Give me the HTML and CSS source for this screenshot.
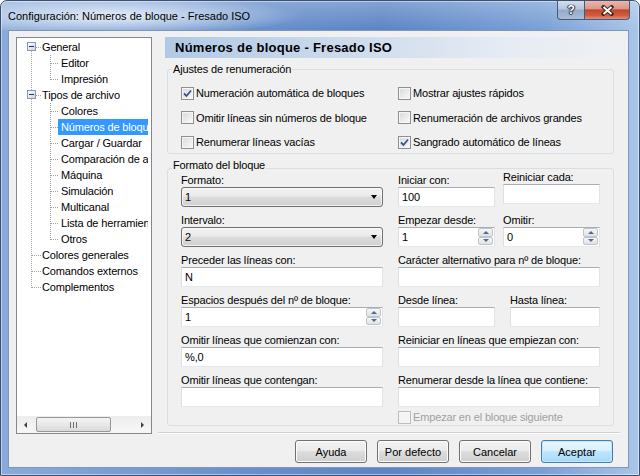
FILE: index.html
```html
<!DOCTYPE html>
<html lang="es">
<head>
    <meta charset="UTF-8">
    <title>Configuración: Números de bloque - Fresado ISO</title>
    <link rel="stylesheet" href="styles.css">
</head>
<body>
<div class="window">
    <div class="titlebar">
        <span class="title">Configuración: Números de bloque - Fresado ISO</span>
        <div class="caption-buttons">
            <span class="caption-btn help">?</span>
            <span class="caption-btn close">
                <svg width="15" height="11" viewBox="0 0 15 11">
                    <path d="M3.5 2 L11.5 9 M11.5 2 L3.5 9" stroke="#3b231c" stroke-width="3.8" stroke-linecap="square"/>
                    <path d="M3.5 2 L11.5 9 M11.5 2 L3.5 9" stroke="#fff" stroke-width="2"/>
                </svg>
            </span>
        </div>
    </div>

    <div class="client">
        <!-- options tree -->
        <div class="tree">
            <div class="tree-view">
                <svg class="tree-lines" width="133" height="260" viewBox="0 0 133 260">
                    <g stroke="#a0a0a0" stroke-dasharray="1 1" fill="none">
                        <path d="M14.5 9 V250"/>
                        <path d="M19 9.5 H24 M19 57.5 H24 M15 217.5 H24 M15 233.5 H24 M15 249.5 H24"/>
                        <path d="M33.5 17 V42 M33.5 65 V202"/>
                        <path d="M34 25.5 H42 M34 41.5 H42 M34 73.5 H42 M34 89.5 H42 M34 105.5 H42 M34 121.5 H42 M34 137.5 H42 M34 153.5 H42 M34 169.5 H42 M34 185.5 H42 M34 201.5 H42"/>
                    </g>
                    <defs>
                        <linearGradient id="box" x1="0" y1="0" x2="1" y2="1">
                            <stop offset="0" stop-color="#ffffff"/>
                            <stop offset="1" stop-color="#c9d3e0"/>
                        </linearGradient>
                    </defs>
                    <g>
                        <rect x="10.5" y="4.5" width="8" height="8" fill="url(#box)" stroke="#8a99b0"/>
                        <path d="M12 8.5 H17" stroke="#1e3565"/>
                        <rect x="10.5" y="52.5" width="8" height="8" fill="url(#box)" stroke="#8a99b0"/>
                        <path d="M12 56.5 H17" stroke="#1e3565"/>
                    </g>
                </svg>
                <div class="nodes">
                    <div class="node"><span class="label">General</span></div>
                    <div class="node child"><span class="label">Editor</span></div>
                    <div class="node child"><span class="label">Impresión</span></div>
                    <div class="node"><span class="label">Tipos de archivo</span></div>
                    <div class="node child"><span class="label">Colores</span></div>
                    <div class="node child selected"><span class="label">Números de bloque</span></div>
                    <div class="node child"><span class="label">Cargar / Guardar</span></div>
                    <div class="node child"><span class="label">Comparación de archivos</span></div>
                    <div class="node child"><span class="label">Máquina</span></div>
                    <div class="node child"><span class="label">Simulación</span></div>
                    <div class="node child"><span class="label">Multicanal</span></div>
                    <div class="node child"><span class="label">Lista de herramientas</span></div>
                    <div class="node child"><span class="label">Otros</span></div>
                    <div class="node"><span class="label">Colores generales</span></div>
                    <div class="node"><span class="label">Comandos externos</span></div>
                    <div class="node"><span class="label">Complementos</span></div>
                </div>
            </div>
            <div class="hscroll">
                <span class="scroll-arrow left"></span>
                <span class="scroll-track"><span class="thumb"><span class="grip"></span></span></span>
                <span class="scroll-arrow right"></span>
            </div>
        </div>

        <!-- settings page -->
        <div class="page">
            <div class="page-head">Números de bloque - Fresado ISO</div>

            <fieldset class="group">
                <legend>Ajustes de renumeración</legend>
                <div class="group-body checks">
                    <div class="check"><span class="cb"><svg width="9" height="9" viewBox="0 0 9 9"><path d="M1 4.5 L3.5 7 L8 1.5" stroke="#3a5394" stroke-width="1.8" fill="none"/></svg></span>Numeración automática de bloques</div>
                    <div class="check"><span class="cb"></span>Mostrar ajustes rápidos</div>
                    <div class="check"><span class="cb"></span>Omitir líneas sin números de bloque</div>
                    <div class="check"><span class="cb"></span>Renumeración de archivos grandes</div>
                    <div class="check"><span class="cb"></span>Renumerar líneas vacías</div>
                    <div class="check"><span class="cb"><svg width="9" height="9" viewBox="0 0 9 9"><path d="M1 4.5 L3.5 7 L8 1.5" stroke="#3a5394" stroke-width="1.8" fill="none"/></svg></span>Sangrado automático de líneas</div>
                </div>
            </fieldset>

            <fieldset class="group format">
                <legend>Formato del bloque</legend>
                <div class="group-body fields">
                    <div class="field">
                        <span class="caption">Formato:</span>
                        <div class="combo"><span>1</span><span class="drop"></span></div>
                    </div>
                    <div class="pair">
                        <div class="field">
                            <span class="caption">Iniciar con:</span>
                            <div class="edit"><span class="value">100</span></div>
                        </div>
                        <div class="field raised">
                            <span class="caption">Reiniciar cada:</span>
                            <div class="edit"><span class="value"></span></div>
                        </div>
                    </div>

                    <div class="field">
                        <span class="caption">Intervalo:</span>
                        <div class="combo"><span>2</span><span class="drop"></span></div>
                    </div>
                    <div class="pair">
                        <div class="field">
                            <span class="caption">Empezar desde:</span>
                            <div class="edit"><span class="value">1</span><span class="spinner"><span class="spin-btn up"></span><span class="spin-btn down"></span></span></div>
                        </div>
                        <div class="field">
                            <span class="caption">Omitir:</span>
                            <div class="edit"><span class="value">0</span><span class="spinner"><span class="spin-btn up"></span><span class="spin-btn down"></span></span></div>
                        </div>
                    </div>

                    <div class="field">
                        <span class="caption">Preceder las líneas con:</span>
                        <div class="edit"><span class="value">N</span></div>
                    </div>
                    <div class="field">
                        <span class="caption">Carácter alternativo para nº de bloque:</span>
                        <div class="edit"><span class="value"></span></div>
                    </div>

                    <div class="field">
                        <span class="caption">Espacios después del nº de bloque:</span>
                        <div class="edit"><span class="value">1</span><span class="spinner"><span class="spin-btn up"></span><span class="spin-btn down"></span></span></div>
                    </div>
                    <div class="pair wide">
                        <div class="field">
                            <span class="caption">Desde línea:</span>
                            <div class="edit"><span class="value"></span></div>
                        </div>
                        <div class="field short">
                            <span class="caption">Hasta línea:</span>
                            <div class="edit"><span class="value"></span></div>
                        </div>
                    </div>

                    <div class="field">
                        <span class="caption">Omitir líneas que comienzan con:</span>
                        <div class="edit"><span class="value">%,0</span></div>
                    </div>
                    <div class="field">
                        <span class="caption">Reiniciar en líneas que empiezan con:</span>
                        <div class="edit"><span class="value"></span></div>
                    </div>

                    <div class="field">
                        <span class="caption">Omitir líneas que contengan:</span>
                        <div class="edit"><span class="value"></span></div>
                    </div>
                    <div class="field">
                        <span class="caption">Renumerar desde la línea que contiene:</span>
                        <div class="edit"><span class="value"></span></div>
                    </div>

                    <div class="check disabled last"><span class="cb"></span>Empezar en el bloque siguiente</div>
                </div>
            </fieldset>

            <div class="separator"></div>

            <div class="buttons">
                <button type="button" class="btn">Ayuda</button>
                <button type="button" class="btn">Por defecto</button>
                <button type="button" class="btn">Cancelar</button>
                <button type="button" class="btn default">Aceptar</button>
            </div>
        </div>
    </div>
</div>
</body>
</html>
```

FILE: styles.css
```css
body {
    margin: 0;
    font-family: "Liberation Sans", Arial, sans-serif;
    font-size: 11px;
    letter-spacing: -0.15px;
    color: #000;
    background: #fff;
}

/* window frame */
.window {
    width: 640px;
    height: 476px;
    box-sizing: border-box;
    border: 1px solid #3b5072;
    border-radius: 7px 7px 0 0;
    background: linear-gradient(90deg, #8aabd9 0%, #6b92cc 35%, #5b85c5 60%, #79a0d6 85%, #a9c5e9 100%);
    box-shadow: inset 0 0 0 1px rgba(255, 255, 255, 0.45);
    display: flex;
    flex-direction: column;
}
.titlebar {
    height: 29px;
    flex: none;
    display: flex;
    align-items: flex-start;
    padding: 0 9px 0 7px;
    background:
        radial-gradient(ellipse 190px 20px at 110px 15px, rgba(236, 243, 251, 0.95), rgba(236, 243, 251, 0) 100%),
        linear-gradient(rgba(255, 255, 255, 0.25), rgba(255, 255, 255, 0));
    border-radius: 6px 6px 0 0;
}
.title {
    margin-top: 8px;
    line-height: 14px;
    font-size: 11px;
    letter-spacing: 0;
    color: #000;
}
.caption-buttons {
    display: flex;
    margin-left: auto;
}
.caption-btn {
    height: 18px;
    display: flex;
    align-items: center;
    justify-content: center;
    border: 1px solid #47597a;
    border-top: 0;
}
.help {
    width: 26px;
    border-radius: 0 0 0 4px;
    background: linear-gradient(#d3deec, #b5c6dd 45%, #93aacb 50%, #a9bdd9);
    color: #fff;
    font-weight: bold;
    font-size: 12px;
    text-shadow: 0 0 1px #223, 1px 0 1px #334, -1px 0 1px #334, 0 1px 1px #334;
}
.close {
    width: 44px;
    border-left: 0;
    border-radius: 0 0 4px 0;
    background: linear-gradient(#eab7a9, #d9998a 42%, #c5462d 50%, #cf5d40 80%, #e2917a);
}

/* client area */
.client {
    flex: 1;
    min-height: 0;
    margin: 0 10px 7px 7px;
    border: 1px solid #7f96bb;
    background: #f0f0f0;
    display: flex;
    padding: 6px 0 0 7px;
}

/* tree */
.tree {
    width: 136px;
    height: 397px;
    box-sizing: border-box;
    flex: none;
    border: 1px solid #828790;
    background: #fff;
    display: flex;
    flex-direction: column;
}
.tree-view {
    flex: 1;
    position: relative;
    padding-top: 1px;
    overflow: hidden;
}
.tree-lines {
    position: absolute;
    left: 0;
    top: 0;
}
.nodes {
    position: relative;
    width: 131px;
    overflow: hidden;
}
.node {
    height: 16px;
    line-height: 16px;
    white-space: nowrap;
    padding-left: 22px;
}
.node.child {
    padding-left: 41px;
}
.node .label {
    display: inline-block;
    padding: 0 3px;
}
.node.selected .label {
    background: #3399ff;
    color: #fff;
}
.hscroll {
    height: 17px;
    flex: none;
    display: flex;
    align-items: center;
    background: linear-gradient(#ededed, #f7f7f7);
}
.scroll-arrow {
    width: 17px;
    height: 17px;
    display: flex;
    align-items: center;
    justify-content: center;
}
.scroll-arrow::before {
    content: "";
    border-style: solid;
    border-color: transparent;
}
.scroll-arrow.left::before {
    border-width: 3px 3px 3px 0;
    border-right-color: #404040;
}
.scroll-arrow.right::before {
    border-width: 3px 0 3px 3px;
    border-left-color: #404040;
}
.scroll-track {
    flex: 1;
    height: 15px;
    padding-left: 2px;
}
.thumb {
    width: 75px;
    height: 15px;
    box-sizing: border-box;
    border: 1px solid #979797;
    border-radius: 2px;
    background: linear-gradient(#f4f4f4, #e8e8e8 50%, #dadada);
    display: flex;
    align-items: center;
    justify-content: center;
}
.grip {
    width: 7px;
    height: 6px;
    background: repeating-linear-gradient(90deg, #6f6f6f 0 1px, transparent 1px 3px);
}

/* page */
.page {
    flex: 1;
    min-width: 0;
    margin-left: 6px;
    display: flex;
    flex-direction: column;
}
.page-head {
    margin-left: 7px;
    height: 21px;
    line-height: 21px;
    padding-left: 10px;
    font-weight: bold;
    font-size: 13px;
    letter-spacing: 0.25px;
    background: linear-gradient(90deg, #b1c9e6 0%, #cddbed 40%, #e6ecf3 75%, #eff1f4 100%);
}
.group {
    margin: 5px 14px 0 9px;
    padding: 0;
    border: 1px solid #d5dfe5;
    border-radius: 3px;
    min-width: 0;
}
.group legend {
    margin-left: 4px;
    padding: 0 1px;
    line-height: 13px;
}
.format legend {
    padding-bottom: 6px;
}
.group-body {
    padding: 9px 12px 3px 13px;
}
.format .group-body {
    margin-top: -5px;
    padding-top: 0;
    padding-bottom: 0;
}

/* checkboxes */
.checks {
    display: grid;
    grid-template-columns: 217px auto;
    row-gap: 8.5px;
}
.check {
    display: flex;
    align-items: center;
    gap: 2px;
    height: 16px;
    white-space: nowrap;
}
.cb {
    width: 13px;
    height: 13px;
    box-sizing: border-box;
    flex: none;
    border: 1px solid #8e8f8f;
    background: linear-gradient(135deg, #d8d8d8, #fbfbfb);
    box-shadow: inset 0 0 0 1px #f6f6f6;
    display: flex;
    align-items: center;
    justify-content: center;
}
.check.disabled {
    color: #a0a0a0;
}
.check.disabled .cb {
    border-color: #bcbcbc;
    background: #f4f4f4;
}
.check.last {
    grid-column: 2;
    margin-top: -4px;
}

/* edit fields */
.fields {
    display: grid;
    grid-template-columns: 202px 202px;
    column-gap: 15px;
    row-gap: 6px;
}
.field .caption {
    display: block;
    line-height: 14px;
    white-space: nowrap;
}
.pair {
    display: flex;
    gap: 8px;
}
.pair.wide {
    gap: 15px;
}
.pair .field {
    width: 97px;
}
.pair .field.short {
    width: 90px;
}
.field.raised {
    margin-top: -3px;
}
.edit {
    height: 20px;
    box-sizing: border-box;
    border: 1px solid;
    border-color: #abadb3 #e2e3ea #e3e9ef #dbdfe6;
    background: #fff;
    padding-left: 3px;
    line-height: 18px;
    display: flex;
}
.edit .value {
    flex: 1;
}
.spinner {
    width: 15px;
    margin: 0 1px 1px 0;
    display: flex;
    flex-direction: column;
}
.spin-btn {
    flex: 1;
    border: 1px solid #bfc4cb;
    border-radius: 2px;
    background: linear-gradient(#f6f6f6, #e1e1e1);
    display: flex;
    align-items: center;
    justify-content: center;
}
.spin-btn::before {
    content: "";
    border-style: solid;
    border-color: transparent;
}
.spin-btn.up::before {
    border-width: 0 3px 3px;
    border-bottom-color: #4d6a9b;
}
.spin-btn.down::before {
    border-width: 3px 3px 0;
    border-top-color: #4d6a9b;
}
.combo {
    height: 20px;
    box-sizing: border-box;
    border: 1px solid #707070;
    border-radius: 3px;
    background: linear-gradient(#f2f2f2, #ebebeb 45%, #dddddd 50%, #cfcfcf);
    box-shadow: inset 0 0 0 1px rgba(255, 255, 255, 0.7);
    display: flex;
    align-items: center;
    justify-content: space-between;
    padding: 0 5px 0 3px;
}
.drop {
    border-style: solid;
    border-width: 4px 3.5px 0;
    border-color: #000 transparent transparent;
}

/* bottom buttons */
.separator {
    margin: 6px 8px 0 0;
    border-top: 1px solid #d0d0d0;
    border-bottom: 1px solid #fff;
}
.buttons {
    display: flex;
    justify-content: flex-end;
    gap: 10px;
    margin-top: 6px;
    padding-right: 15px;
}
.btn {
    width: 72px;
    height: 23px;
    padding: 0;
    box-sizing: border-box;
    border: 1px solid #707070;
    border-radius: 3px;
    background: linear-gradient(#f2f2f2, #ebebeb 45%, #dddddd 50%, #cfcfcf);
    box-shadow: inset 0 0 0 1px #fcfcfc;
    font: inherit;
    color: #000;
}
.btn.default {
    border-color: #3c7fb1;
    background: linear-gradient(#eaf6fd, #d9f0fc 45%, #bee6fd 50%, #a7d9f5);
    box-shadow: inset 0 0 0 1px #c4e8fb;
}
```
